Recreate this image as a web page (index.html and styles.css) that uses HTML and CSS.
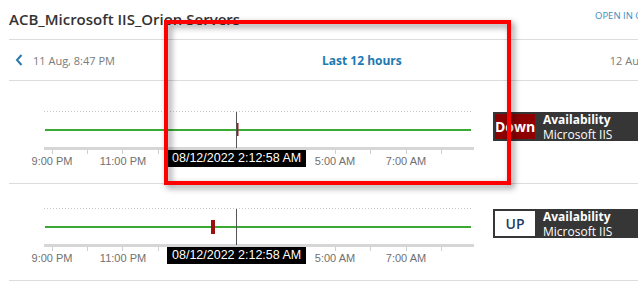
FILE: index.html
```html
<!DOCTYPE html>
<html lang="en">
<head>
    <meta charset="UTF-8">
    <title>ACB_Microsoft IIS_Orion Servers</title>
    <link rel="stylesheet" href="styles.css">
</head>
<body>
    <div class="panel">
        <div class="panel-head">
            <h2 class="panel-title">ACB_Microsoft IIS_Orion Servers</h2>
            <a class="open-link">OPEN IN ORION</a>
        </div>

        <div class="range-nav">
            <span class="range-prev">
                <svg class="chevron" width="8" height="12" viewBox="0 0 8 12"><path d="M6.5 1 L2 6 L6.5 11" fill="none" stroke="#2a7aa8" stroke-width="2"/></svg>
                11 Aug, 8:47 PM
            </span>
            <span class="range-label">Last 12 hours</span>
            <span class="range-next">12 Aug, 8:47 AM</span>
        </div>

        <div class="status-row status-row-first">
            <div class="chart">
                <svg width="470" height="60" viewBox="0 0 470 60">
                    <line x1="35" y1="1.5" x2="464" y2="1.5" stroke="#c8c8c8" stroke-dasharray="1 2"/>
                    <line x1="36" y1="20" x2="462" y2="20" stroke="#3aaa35" stroke-width="2"/>
                    <rect x="35" y="37" width="430" height="3" fill="#d6d6d6"/>
                    <g stroke="#cfcfcf">
                        <line x1="43.5" y1="40" x2="43.5" y2="44"/><line x1="78.5" y1="40" x2="78.5" y2="44"/>
                        <line x1="113.5" y1="40" x2="113.5" y2="44"/><line x1="149.5" y1="40" x2="149.5" y2="44"/>
                        <line x1="184.5" y1="40" x2="184.5" y2="44"/><line x1="219.5" y1="40" x2="219.5" y2="44"/>
                        <line x1="255.5" y1="40" x2="255.5" y2="44"/><line x1="290.5" y1="40" x2="290.5" y2="44"/>
                        <line x1="326.5" y1="40" x2="326.5" y2="44"/><line x1="361.5" y1="40" x2="361.5" y2="44"/>
                        <line x1="397.5" y1="40" x2="397.5" y2="44"/><line x1="432.5" y1="40" x2="432.5" y2="44"/>
                    </g>
                    <g class="axis-label" text-anchor="middle">
                        <text x="43" y="55">9:00 PM</text>
                        <text x="114" y="55">11:00 PM</text>
                        <text x="326" y="55">5:00 AM</text>
                        <text x="397" y="55">7:00 AM</text>
                    </g>
                    <rect x="228" y="13" width="1.5" height="13" fill="#a01818"/>
                    <line x1="227.5" y1="2" x2="227.5" y2="38" stroke="#555"/>
                </svg>
                <div class="chart-tip">08/12/2022 2:12:58 AM</div>
            </div>
            <div class="badge">
                <div class="badge-state state-down">Down</div>
                <div class="badge-text">
                    <strong>Availability</strong>
                    <span>Microsoft IIS</span>
                </div>
            </div>
        </div>

        <div class="status-row">
            <div class="chart">
                <svg width="470" height="60" viewBox="0 0 470 60">
                    <line x1="35" y1="1.5" x2="464" y2="1.5" stroke="#c8c8c8" stroke-dasharray="1 2"/>
                    <line x1="36" y1="20" x2="462" y2="20" stroke="#3aaa35" stroke-width="2"/>
                    <rect x="35" y="37" width="430" height="3" fill="#d6d6d6"/>
                    <g stroke="#cfcfcf">
                        <line x1="43.5" y1="40" x2="43.5" y2="44"/><line x1="78.5" y1="40" x2="78.5" y2="44"/>
                        <line x1="113.5" y1="40" x2="113.5" y2="44"/><line x1="149.5" y1="40" x2="149.5" y2="44"/>
                        <line x1="184.5" y1="40" x2="184.5" y2="44"/><line x1="219.5" y1="40" x2="219.5" y2="44"/>
                        <line x1="255.5" y1="40" x2="255.5" y2="44"/><line x1="290.5" y1="40" x2="290.5" y2="44"/>
                        <line x1="326.5" y1="40" x2="326.5" y2="44"/><line x1="361.5" y1="40" x2="361.5" y2="44"/>
                        <line x1="397.5" y1="40" x2="397.5" y2="44"/><line x1="432.5" y1="40" x2="432.5" y2="44"/>
                    </g>
                    <g class="axis-label" text-anchor="middle">
                        <text x="43" y="55">9:00 PM</text>
                        <text x="114" y="55">11:00 PM</text>
                        <text x="326" y="55">5:00 AM</text>
                        <text x="397" y="55">7:00 AM</text>
                    </g>
                    <rect x="202" y="13" width="4" height="14" fill="#9b1010"/>
                    <line x1="227.5" y1="2" x2="227.5" y2="38" stroke="#555"/>
                </svg>
                <div class="chart-tip">08/12/2022 2:12:58 AM</div>
            </div>
            <div class="badge">
                <div class="badge-state state-up">UP</div>
                <div class="badge-text">
                    <strong>Availability</strong>
                    <span>Microsoft IIS</span>
                </div>
            </div>
        </div>
    </div>

    <div class="highlight"></div>
</body>
</html>
```

FILE: styles.css
```css
* {
    margin: 0;
    padding: 0;
    box-sizing: border-box;
}

body {
    font-family: "Open Sans", Arial, sans-serif;
    background-color: #fff;
    width: 638px;
    height: 286px;
    overflow: hidden;
    position: relative;
}

.panel {
    margin-left: 9px;
    width: 720px;
}

.panel-head {
    display: grid;
    grid-template-columns: 586px auto;
    height: 40px;
    border-bottom: 1px solid #dcdcdc;
}

.panel-title {
    font-size: 15px;
    font-weight: 600;
    color: #333;
    line-height: 20px;
    padding-top: 9px;
    white-space: nowrap;
}

.open-link {
    font-size: 9.5px;
    color: #3c8dbc;
    line-height: 14px;
    padding-top: 9px;
    white-space: nowrap;
}

.range-nav {
    display: grid;
    grid-template-columns: 313px auto 1fr;
    align-items: center;
    height: 41px;
    border-bottom: 1px solid #dcdcdc;
    font-size: 11px;
    color: #7a7a7a;
    white-space: nowrap;
}

.range-prev {
    display: flex;
    align-items: center;
    gap: 10px;
    padding-left: 6px;
}

.chevron {
    display: block;
}

.range-label {
    font-size: 12px;
    font-weight: 700;
    color: #2079b0;
}

.range-next {
    padding-left: 208px;
}

.status-row {
    display: flex;
    align-items: flex-start;
    gap: 14px;
    padding-top: 23px;
    padding-bottom: 13px;
    border-bottom: 1px solid #dcdcdc;
}

.status-row-first {
    padding-top: 29px;
}

.chart {
    position: relative;
    width: 470px;
    height: 60px;
    flex: none;
}

.chart svg {
    display: block;
}

.axis-label {
    font-family: "Liberation Sans", Arial, sans-serif;
    font-size: 11px;
    fill: #707070;
}

.chart-tip {
    position: absolute;
    left: 158px;
    top: 40px;
    width: 139px;
    height: 17px;
    background-color: #000;
    color: #fff;
    font-family: "Liberation Sans", Arial, sans-serif;
    font-size: 12.5px;
    line-height: 17px;
    padding-left: 5px;
    white-space: nowrap;
}

.badge {
    display: flex;
    align-items: center;
    gap: 8px;
    width: 170px;
    height: 29px;
    margin-top: 2px;
    padding: 2px;
    background-color: #363636;
    flex: none;
}

.badge-state {
    width: 40px;
    height: 25px;
    display: flex;
    align-items: center;
    justify-content: center;
    font-size: 14px;
    font-weight: 700;
}

.state-down {
    background-color: #8f0000;
    color: #fff;
}

.state-up {
    background-color: #fff;
    color: #1f3b63;
    font-size: 14px;
    font-weight: 600;
}

.badge-text {
    display: flex;
    flex-direction: column;
    color: #fff;
    font-size: 12px;
    line-height: 15px;
    white-space: nowrap;
}

.badge-text strong {
    font-weight: 700;
}

.highlight {
    position: absolute;
    left: 164px;
    top: 20px;
    width: 347px;
    height: 165px;
    border: 4px solid #ff0000;
    filter: drop-shadow(3px 3px 3px rgba(0, 0, 0, 0.45));
}
```
